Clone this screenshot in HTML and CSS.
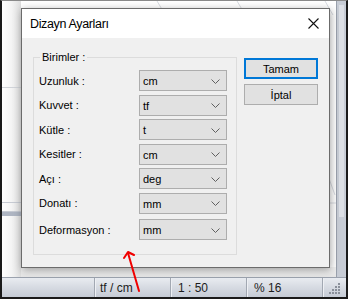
FILE: index.html
```html
<!DOCTYPE html>
<html lang="tr">
<head>
<meta charset="utf-8">
<title>Dizayn Ayarları</title>
<link rel="stylesheet" href="styles.css">
</head>
<body>
<div class="app">
  <div class="workspace">
    <div class="sidebar">
      <div class="side-line side-line-a"></div>
      <div class="side-box"></div>
      <div class="side-band"></div>
    </div>
    <div class="canvas-col">
      <div class="canvas">
        <svg class="drawing" width="315" height="266" viewBox="0 0 315 266">
          <g stroke="#d9dce2" stroke-width="1" fill="none">
            <line x1="136" y1="0" x2="142" y2="10"/>
            <line x1="216" y1="0" x2="222" y2="10"/>
            <line x1="304" y1="0" x2="312" y2="14"/>
            <line x1="306" y1="172" x2="314" y2="194"/>
            <line x1="300" y1="202" x2="315" y2="202"/>
          </g>
        </svg>
      </div>
      <div class="hscroll"></div>
    </div>
    <div class="rightbar"><div class="rightbar-inner"></div></div>
  </div>
  <div class="statusbar">
    <div class="seg seg-main"></div>
    <div class="seg seg-unit">tf / cm</div>
    <div class="seg seg-scale">1 : 50</div>
    <div class="seg seg-zoom">% 16</div>
    <div class="seg seg-grip">
      <svg width="12" height="12" viewBox="0 0 12 12">
        <g fill="#8a909a">
          <rect x="9" y="1" width="2" height="2"/>
          <rect x="6" y="4" width="2" height="2"/>
          <rect x="9" y="4" width="2" height="2"/>
          <rect x="3" y="7" width="2" height="2"/>
          <rect x="6" y="7" width="2" height="2"/>
          <rect x="9" y="7" width="2" height="2"/>
          <rect x="0" y="10" width="2" height="2"/>
          <rect x="3" y="10" width="2" height="2"/>
          <rect x="6" y="10" width="2" height="2"/>
          <rect x="9" y="10" width="2" height="2"/>
        </g>
      </svg>
    </div>
  </div>

  <div class="dialog">
    <div class="titlebar">
      <span class="title">Dizayn Ayarları</span>
      <svg class="close" width="11" height="11" viewBox="0 0 11 11">
        <path d="M0.5 0.5 L10.5 10.5 M10.5 0.5 L0.5 10.5" stroke="#111" stroke-width="1.1" fill="none"/>
      </svg>
    </div>
    <div class="dialog-body">
      <div class="group">
        <span class="group-label">Birimler :</span>
        <div class="rows">
          <div class="row"><span class="lbl">Uzunluk :</span><div class="combo"><span>cm</span><svg class="chev" width="9" height="5" viewBox="0 0 9 5"><path d="M0.5 0.5 L4.5 4.5 L8.5 0.5" stroke="#606060" fill="none"/></svg></div></div>
          <div class="row"><span class="lbl">Kuvvet :</span><div class="combo"><span>tf</span><svg class="chev" width="9" height="5" viewBox="0 0 9 5"><path d="M0.5 0.5 L4.5 4.5 L8.5 0.5" stroke="#606060" fill="none"/></svg></div></div>
          <div class="row"><span class="lbl">Kütle :</span><div class="combo"><span>t</span><svg class="chev" width="9" height="5" viewBox="0 0 9 5"><path d="M0.5 0.5 L4.5 4.5 L8.5 0.5" stroke="#606060" fill="none"/></svg></div></div>
          <div class="row"><span class="lbl">Kesitler :</span><div class="combo"><span>cm</span><svg class="chev" width="9" height="5" viewBox="0 0 9 5"><path d="M0.5 0.5 L4.5 4.5 L8.5 0.5" stroke="#606060" fill="none"/></svg></div></div>
          <div class="row"><span class="lbl">Açı :</span><div class="combo"><span>deg</span><svg class="chev" width="9" height="5" viewBox="0 0 9 5"><path d="M0.5 0.5 L4.5 4.5 L8.5 0.5" stroke="#606060" fill="none"/></svg></div></div>
          <div class="row"><span class="lbl">Donatı :</span><div class="combo"><span>mm</span><svg class="chev" width="9" height="5" viewBox="0 0 9 5"><path d="M0.5 0.5 L4.5 4.5 L8.5 0.5" stroke="#606060" fill="none"/></svg></div></div>
          <div class="row row-last"><span class="lbl">Deformasyon :</span><div class="combo"><span>mm</span><svg class="chev" width="9" height="5" viewBox="0 0 9 5"><path d="M0.5 0.5 L4.5 4.5 L8.5 0.5" stroke="#606060" fill="none"/></svg></div></div>
        </div>
      </div>
      <div class="buttons">
        <button class="btn btn-default">Tamam</button>
        <button class="btn">İptal</button>
      </div>
    </div>
  </div>

  <svg class="arrow" width="20" height="44" viewBox="0 0 20 44">
    <g stroke="#f00000" stroke-width="2" fill="none" stroke-linecap="round" stroke-linejoin="round">
      <path d="M17 41 L6 3"/>
      <path d="M2 8 L6 2 L12 5"/>
    </g>
  </svg>
</div>
</body>
</html>
```

FILE: styles.css
```css
* { box-sizing: border-box; }
html, body { margin: 0; padding: 0; }
body {
  width: 348px;
  height: 299px;
  overflow: hidden;
  font-family: "Liberation Sans", Arial, sans-serif;
  font-size: 11px;
  color: #000;
}
.app {
  position: relative;
  width: 348px;
  height: 299px;
  border-left: 2px solid #1a1a1a;
  border-right: 2px solid #1a1a1a;
  border-bottom: 2px solid #1a1a1a;
  border-top: 1px solid #8a8a8a;
  display: flex;
  flex-direction: column;
  background: #fff;
}
.workspace {
  flex: 1;
  display: flex;
  min-height: 0;
}
.sidebar {
  position: relative;
  width: 19px;
  background: linear-gradient(to right, #ffffff 0%, #f4f4f4 50%, #dedede 100%);
  display: flex;
  flex-direction: column;
}
.side-line { height: 1px; background: #d0d3d8; }
.side-line-a { margin-top: 86px; }
.side-box {
  margin-top: 114px;
  height: 10px;
  border-top: 1px solid #c6cad2;
  border-bottom: 1px solid #c6cad2;
}
.side-band {
  height: 4px;
  background: #aeb5c2;
}
.canvas-col {
  flex: 1;
  display: flex;
  flex-direction: column;
}
.canvas {
  flex: 1;
  background: #fff;
  overflow: hidden;
}
.drawing { display: block; }
.hscroll {
  height: 10px;
  background: linear-gradient(to bottom, #f2f2f2, #e6e6e6);
}
.rightbar {
  width: 10px;
  background: #c7ccd5;
  border-left: 1px solid #9aa1ad;
  display: flex;
  justify-content: center;
}
.rightbar-inner {
  width: 5px;
  margin-top: 4px;
  margin-bottom: 60px;
  background: #dcdfe5;
}
.statusbar {
  height: 20px;
  display: flex;
  border-top: 1px solid #9ba2ae;
  background: linear-gradient(to bottom, #e9ecf1 0%, #d8dce3 45%, #c5cbd5 100%);
  font-size: 12px;
  color: #1c1c1c;
}
.seg {
  display: flex;
  align-items: center;
  padding-left: 5px;
  border-left: 1px solid #a2a8b2;
  box-shadow: inset 1px 0 0 #eef0f4;
}
.seg-main { width: 92px; border-left: 0; box-shadow: none; }
.seg-unit { width: 76px; }
.seg-scale { width: 76px; padding-left: 7px; }
.seg-zoom { width: 76px; padding-left: 7px; }
.seg-grip {
  flex: 1;
  justify-content: flex-end;
  align-items: flex-end;
  padding: 0 5px 3px 0;
}

.dialog {
  position: absolute;
  left: 19px;
  top: 7px;
  width: 309px;
  height: 260px;
  border: 1px solid #6b6b6b;
  background: #f0f0f0;
  box-shadow: 1px 2px 8px rgba(0, 0, 0, 0.35);
  display: flex;
  flex-direction: column;
}
.titlebar {
  height: 29px;
  background: #fff;
  display: flex;
  align-items: center;
  justify-content: space-between;
  padding: 0 10px 0 8px;
}
.title {
  font-size: 12.5px;
  letter-spacing: -0.35px;
  padding-top: 1px;
}
.close { display: block; }
.dialog-body {
  flex: 1;
  display: flex;
  padding: 19px 11px 0 11px;
}
.group {
  position: relative;
  width: 204px;
  height: 198px;
  border: 1px solid #dcdcdc;
  padding: 12px 0 0 5px;
}
.group-label {
  position: absolute;
  left: 6px;
  top: -8px;
  padding: 0 2px;
  background: #f0f0f0;
  line-height: 14px;
}
.rows {
  display: flex;
  flex-direction: column;
  gap: 3.5px;
}
.row {
  display: flex;
  align-items: center;
  height: 21px;
}
.row-last { margin-top: 2px; }
.lbl { width: 100px; }
.combo {
  width: 88px;
  height: 21px;
  background: #e1e1e1;
  border: 1px solid #adadad;
  display: flex;
  align-items: center;
  justify-content: space-between;
  padding: 1px 6px 0 3px;
  font-size: 11px;
}
.chev { display: block; }
.buttons {
  margin-left: 7px;
  display: flex;
  flex-direction: column;
  gap: 5px;
  padding-top: 1px;
}
.btn {
  width: 74px;
  height: 21px;
  background: #e1e1e1;
  border: 1px solid #adadad;
  font-family: "Liberation Sans", Arial, sans-serif;
  font-size: 11px;
  color: #000;
  padding: 0;
  border-radius: 0;
}
.btn-default { border: 2px solid #0078d7; }
.arrow {
  position: absolute;
  left: 120px;
  top: 249px;
}
```
